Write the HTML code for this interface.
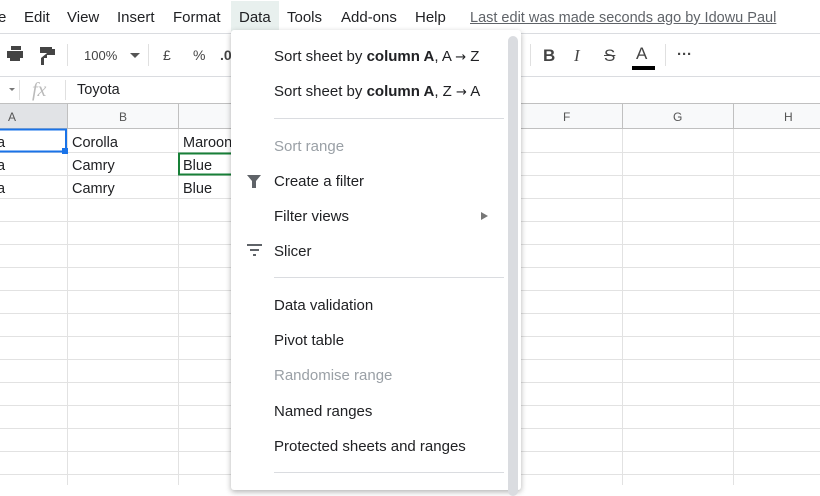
<!DOCTYPE html>
<html><head><style>
body{margin:0;width:820px;height:485px;overflow:hidden;background:#fff;font-family:"Liberation Sans",Arial,sans-serif;position:relative}
.a{position:absolute;white-space:nowrap}
.m{font-size:15px;color:#202124;top:9px}
.mi{position:absolute;left:274px;font-size:15px;color:#202124;white-space:nowrap}
.dis{color:#9aa0a6}
.c{font-size:14.5px;color:#202124}
.ar{font-family:"DejaVu Sans",sans-serif;font-size:13px}
</style></head><body>
<svg class="a" style="left:0;top:0" width="820" height="485">
 <rect x="0" y="0" width="820" height="36" fill="#fff"/>
 <rect x="231" y="1" width="48" height="32" fill="#e8f0ee"/>
 <line x1="0" y1="33.5" x2="820" y2="33.5" stroke="#dadce0"/>
 <line x1="0" y1="76.5" x2="820" y2="76.5" stroke="#dadce0"/>
 <line x1="0" y1="103.5" x2="820" y2="103.5" stroke="#c0c0c0"/>
 <rect x="0" y="104" width="820" height="25" fill="#f8f9fa"/>
 <rect x="0" y="104" width="67" height="25" fill="#e1e3e6"/>
 <line x1="0" y1="128.5" x2="820" y2="128.5" stroke="#c0c0c0"/>
 <g stroke="#e2e2e2">
  <line x1="0" y1="152.5" x2="820" y2="152.5"/><line x1="0" y1="175.5" x2="820" y2="175.5"/>
  <line x1="0" y1="198.5" x2="820" y2="198.5"/><line x1="0" y1="221.5" x2="820" y2="221.5"/>
  <line x1="0" y1="244.5" x2="820" y2="244.5"/><line x1="0" y1="267.5" x2="820" y2="267.5"/>
  <line x1="0" y1="290.5" x2="820" y2="290.5"/><line x1="0" y1="313.5" x2="820" y2="313.5"/>
  <line x1="0" y1="336.5" x2="820" y2="336.5"/><line x1="0" y1="359.5" x2="820" y2="359.5"/>
  <line x1="0" y1="382.5" x2="820" y2="382.5"/><line x1="0" y1="405.5" x2="820" y2="405.5"/>
  <line x1="0" y1="428.5" x2="820" y2="428.5"/><line x1="0" y1="451.5" x2="820" y2="451.5"/>
  <line x1="0" y1="474.5" x2="820" y2="474.5"/>
  <line x1="67.5" y1="129" x2="67.5" y2="485"/><line x1="178.5" y1="129" x2="178.5" y2="485"/>
  <line x1="622.5" y1="129" x2="622.5" y2="485"/><line x1="733.5" y1="129" x2="733.5" y2="485"/>
 </g>
 <g stroke="#c0c0c0"><line x1="67.5" y1="104" x2="67.5" y2="129"/><line x1="178.5" y1="104" x2="178.5" y2="129"/><line x1="622.5" y1="104" x2="622.5" y2="129"/><line x1="733.5" y1="104" x2="733.5" y2="129"/></g>
 <rect x="-2" y="129.5" width="68" height="22" fill="none" stroke="#1a73e8" stroke-width="2"/>
 <rect x="62" y="148" width="6" height="6" fill="#1a73e8"/>
 <rect x="179" y="153.5" width="60" height="21" fill="none" stroke="#188038" stroke-width="2"/>
 <g stroke="#e0e0e0"><line x1="67.5" y1="44" x2="67.5" y2="66"/><line x1="148.5" y1="44" x2="148.5" y2="66"/><line x1="19.5" y1="80" x2="19.5" y2="100"/><line x1="65.5" y1="80" x2="65.5" y2="100"/><line x1="530.5" y1="44" x2="530.5" y2="66"/><line x1="665.5" y1="44" x2="665.5" y2="66"/></g>
 <path d="M9 50h12v-4h-10v4zM7 51h16v7h-3v3h-10v-3h-3z" fill="#444"/>
 <path d="M40 47h12v6h-12zM52 49h3v6h-8v3h-3v7h-3v-7" fill="#444"/>
 <path d="M130 53l5 5 5-5z" fill="#555"/>
 <path d="M9 88l3 3 3-3z" fill="#777"/>
 <rect x="632" y="66" width="23" height="4" fill="#000"/>
</svg>
<div class="a m" style="left:-2px">e</div>
<div class="a m" style="left:24px">Edit</div>
<div class="a m" style="left:67px">View</div>
<div class="a m" style="left:117px">Insert</div>
<div class="a m" style="left:173px">Format</div>
<div class="a m" style="left:239px">Data</div>
<div class="a m" style="left:287px">Tools</div>
<div class="a m" style="left:341px">Add-ons</div>
<div class="a m" style="left:415px">Help</div>
<div class="a" style="left:470px;top:10px;font-size:14.5px;color:#5f6368;text-decoration:underline">Last edit was made seconds ago by Idowu Paul</div>
<div class="a" style="left:84px;top:48px;font-size:13px;color:#444">100%</div>
<div class="a" style="left:163px;top:47px;font-size:14px;color:#444">£</div>
<div class="a" style="left:193px;top:47px;font-size:14px;color:#444">%</div>
<div class="a" style="left:220px;top:47px;font-size:14px;color:#444;font-weight:bold">.0</div>
<div class="a" style="left:543px;top:46px;font-size:17px;color:#444;font-weight:bold">B</div>
<div class="a" style="left:574px;top:46px;font-size:17px;color:#444;font-style:italic;font-family:'Liberation Serif',serif">I</div>
<div class="a" style="left:604px;top:46px;font-size:17px;color:#444;text-decoration:line-through">S</div>
<div class="a" style="left:636px;top:44px;font-size:17px;color:#444">A</div>
<div class="a" style="left:677px;top:46px;font-size:15px;color:#444;font-weight:bold">···</div>
<div class="a" style="left:32px;top:79px;font-size:20px;color:#bbb;font-style:italic;font-family:'Liberation Serif',serif">fx</div>
<div class="a" style="left:77px;top:82px;font-size:14.5px;color:#202124">Toyota</div>
<div class="a" style="left:8px;top:110px;font-size:12px;color:#555">A</div>
<div class="a" style="left:119px;top:110px;font-size:12px;color:#555">B</div>
<div class="a" style="left:563px;top:110px;font-size:12px;color:#555">F</div>
<div class="a" style="left:673px;top:110px;font-size:12px;color:#555">G</div>
<div class="a" style="left:784px;top:110px;font-size:12px;color:#555">H</div>
<div class="a c" style="left:-3px;top:135px">a</div><div class="a c" style="left:72px;top:135px">Corolla</div><div class="a c" style="left:183px;top:135px">Maroon</div>
<div class="a c" style="left:-3px;top:158px">a</div><div class="a c" style="left:72px;top:158px">Camry</div><div class="a c" style="left:183px;top:158px">Blue</div>
<div class="a c" style="left:-3px;top:181px">a</div><div class="a c" style="left:72px;top:181px">Camry</div><div class="a c" style="left:183px;top:181px">Blue</div>
<div class="a" style="left:231px;top:30px;width:290px;height:460px;background:#fff;box-shadow:0 2px 6px rgba(0,0,0,.3);border-radius:3px">
 <div class="a" style="left:277px;top:6px;width:10px;height:460px;background:#dadce0;border-radius:5px"></div>
 <div class="a" style="left:43px;top:88px;width:230px;height:1px;background:#dadce0"></div>
 <div class="a" style="left:43px;top:247px;width:230px;height:1px;background:#dadce0"></div>
 <div class="a" style="left:43px;top:442px;width:230px;height:1px;background:#dadce0"></div>
</div>
<div class="mi" style="top:48px">Sort sheet by <b>column A</b>, A <span class="ar">→</span> Z</div>
<div class="mi" style="top:83px">Sort sheet by <b>column A</b>, Z <span class="ar">→</span> A</div>
<div class="mi dis" style="top:138px">Sort range</div>
<div class="mi" style="top:173px">Create a filter</div>
<div class="mi" style="top:208px">Filter views</div>
<div class="mi" style="top:243px">Slicer</div>
<div class="mi" style="top:297px">Data validation</div>
<div class="mi" style="top:332px">Pivot table</div>
<div class="mi dis" style="top:367px">Randomise range</div>
<div class="mi" style="top:403px">Named ranges</div>
<div class="mi" style="top:438px">Protected sheets and ranges</div>
<svg class="a" style="left:240px;top:171px" width="260" height="95">
 <path d="M7 4h14l-5 6v7h-4v-7z" fill="#5f6368"/>
 <path d="M241 41l7 4-7 4z" fill="#777"/>
 <rect x="7" y="73" width="15" height="2" fill="#5f6368"/>
 <rect x="10" y="78" width="9" height="2" fill="#5f6368"/>
 <rect x="13" y="83" width="3" height="2" fill="#5f6368"/>
</svg>
</body></html>
